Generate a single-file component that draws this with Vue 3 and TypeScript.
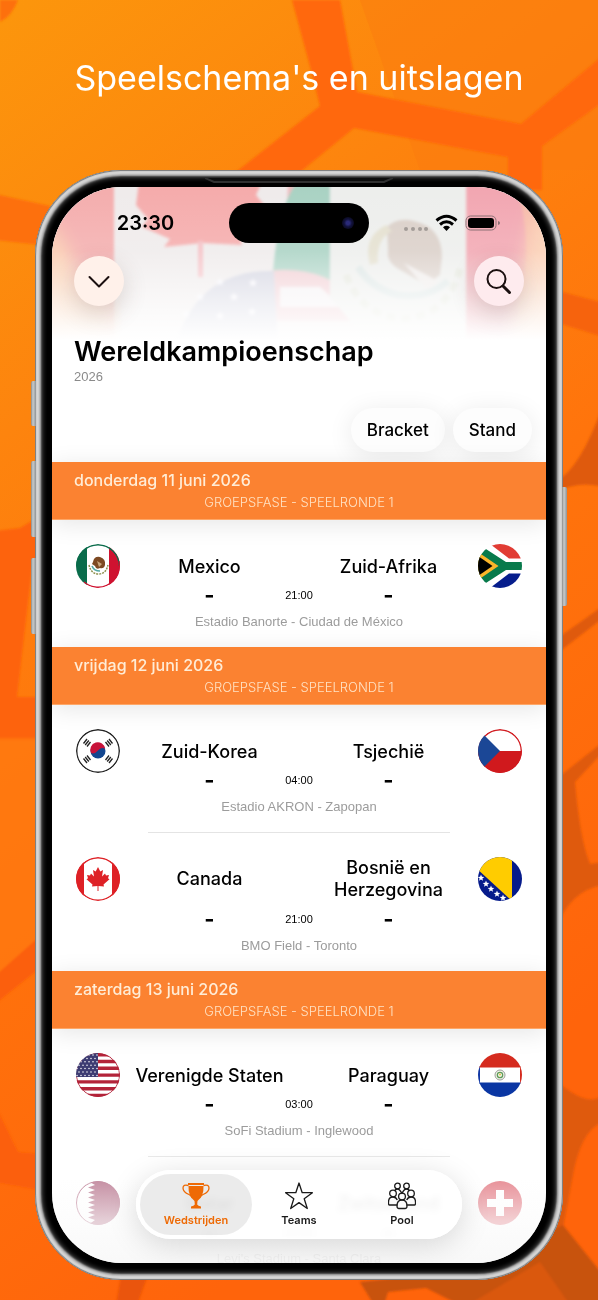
<script setup lang="ts">
type FlagId = 'mx' | 'za' | 'kr' | 'cz' | 'ca' | 'ba' | 'us' | 'py' | 'qa' | 'ch'

interface Team {
  flag: FlagId
  name: string
}

interface Match {
  home: Team
  away: Team
  time: string
  venue: string
  tall?: boolean
}

interface MatchDay {
  date: string
  round: string
  matches: Match[]
}

const days: MatchDay[] = [
  {
    date: 'donderdag 11 juni 2026',
    round: 'GROEPSFASE - SPEELRONDE 1',
    matches: [
      {
        home: { flag: 'mx', name: 'Mexico' },
        away: { flag: 'za', name: 'Zuid-Afrika' },
        time: '21:00',
        venue: 'Estadio Banorte - Ciudad de México',
      },
    ],
  },
  {
    date: 'vrijdag 12 juni 2026',
    round: 'GROEPSFASE - SPEELRONDE 1',
    matches: [
      {
        home: { flag: 'kr', name: 'Zuid-Korea' },
        away: { flag: 'cz', name: 'Tsjechië' },
        time: '04:00',
        venue: 'Estadio AKRON - Zapopan',
      },
      {
        home: { flag: 'ca', name: 'Canada' },
        away: { flag: 'ba', name: 'Bosnië en Herzegovina' },
        time: '21:00',
        venue: 'BMO Field - Toronto',
        tall: true,
      },
    ],
  },
  {
    date: 'zaterdag 13 juni 2026',
    round: 'GROEPSFASE - SPEELRONDE 1',
    matches: [
      {
        home: { flag: 'us', name: 'Verenigde Staten' },
        away: { flag: 'py', name: 'Paraguay' },
        time: '03:00',
        venue: 'SoFi Stadium - Inglewood',
      },
      {
        home: { flag: 'qa', name: 'Qatar' },
        away: { flag: 'ch', name: 'Zwitserland' },
        time: '21:00',
        venue: "Levi's Stadium - Santa Clara",
      },
    ],
  },
]

const usStars: { x: number; y: number }[] = []
for (let row = 0; row < 7; row++) {
  for (let col = 0; col < 6; col++) {
    usStars.push({ x: (row % 2 ? 3 : 1) + col * 4, y: 2 + row * 3.4 })
  }
}

const starPath = 'M0-3 .8-1 2.9-.9 1.2.4 1.8 2.4 0 1.2-1.8 2.4-1.2.4-2.9-.9-.8-1Z'
const bosniaStars = [[3, 21], [8, 27], [13, 32], [19, 37], [25, 41]]
const heroStars = [[168, 95], [148, 110], [182, 110], [134, 127], [168, 129], [201, 96], [200, 125]]
</script>

<template>
  <main class="stage">
    <svg class="backdrop" viewBox="0 0 598 1300" preserveAspectRatio="xMidYMid slice" aria-hidden="true">
      <defs>
        <linearGradient id="bgFill" x1="0" y1="0" x2=".35" y2="1">
          <stop offset="0" stop-color="#fc960c" />
          <stop offset=".3" stop-color="#fd840e" />
          <stop offset=".6" stop-color="#ff740c" />
          <stop offset="1" stop-color="#ff640b" />
        </linearGradient>
        <filter id="soft"><feGaussianBlur stdDeviation="1" /></filter>
      </defs>
      <rect width="598" height="1300" fill="url(#bgFill)" />
      <path d="M360 0H598V170H420Z" fill="#fb790f" opacity=".45" />
      <g filter="url(#soft)">
        <path d="M292 0H340L357 92 521 124 600 58V104L542 146V190H508V157L354 128 300 172H236L320 106 311 70Z" fill="#ff670a" />
        <path d="M-5 194 50 206V246L-5 240ZM0 0H18Q12 16 0 22Z" fill="#fd700c" />
        <path d="M-5 531 20 528 40 516V740H-5ZM33 560 17 697H40V560Z" fill="#fd640b" fill-rule="evenodd" />
        <path d="M-5 738H40V940L-5 976Z" fill="#ff790c" opacity=".7" />
        <path d="M-5 976 40 936V968L-5 1004ZM-5 1105 18 1152 40 1154V1190L-5 1182Z" fill="#fb5f0a" />
        <path d="M555 290 600 302V336L555 322Z" fill="#f6640a" />
        <path
          d="M555 482Q580 470 603 405V487Q580 480 555 492ZM555 640 603 606V618L555 655ZM555 780 603 742V752L575 782Q580 840 590 864L603 862V885Q570 890 555 930ZM555 1080Q590 1110 603 1094V1122Q580 1130 572 1180L555 1270Z"
          fill="#df5a0c"
        />
        <path d="M121 1275H148L137 1305H116Z" fill="#ea5507" />
        <path d="M360 1282 470 1270 563 1225 603 1275V1305H460L426 1288 388 1292 384 1305H374Z" fill="#c8520e" />
        <path d="M468 1305 540 1262 570 1305Z" fill="#e95d0b" opacity=".55" />
      </g>
    </svg>

    <h1 class="headline">Speelschema's en uitslagen</h1>

    <section class="phone">
      <span class="key key-action"></span>
      <span class="key key-up"></span>
      <span class="key key-down"></span>
      <span class="key key-power"></span>
      <svg class="speaker" viewBox="0 0 188 6" preserveAspectRatio="none" aria-hidden="true">
        <path d="M0 0 9 4H179L188 0" fill="#0d0d0d" stroke="#303030" stroke-width="2" />
      </svg>

      <div class="screen">
        <svg class="hero" viewBox="0 0 494 160" preserveAspectRatio="xMidYMin slice" aria-hidden="true">
          <defs>
            <linearGradient id="fade" x1="0" y1="0" x2="0" y2="1">
              <stop offset="0" stop-color="#fff" stop-opacity="0" />
              <stop offset=".4" stop-color="#fff" stop-opacity=".15" />
              <stop offset=".7" stop-color="#fff" stop-opacity=".65" />
              <stop offset=".95" stop-color="#fff" />
            </linearGradient>
            <filter id="haze"><feGaussianBlur stdDeviation="1.500" /></filter>
            <filter id="hazeWide"><feGaussianBlur stdDeviation="9" /></filter>
          </defs>
          <rect width="494" height="160" fill="#efebeb" />
          <g filter="url(#haze)">
            <path d="M-5-5H62V160H-5Z" fill="#f4adad" />
            <path d="M-8 30Q20 60 26 100L62 118V165H-8Z" fill="#fbd0ae" filter="url(#hazeWide)" />
            <path d="M87-5 84 18 96 32 90 40 118 52 112 60 150 56 190 58 186 44 212 18 204 8 210-5Z" fill="#f5abab" />
            <path d="M146 54H151V90H146Z" fill="#f4c0c4" />
            <path d="M236-5H262Q240 10 234 50Z" fill="#f0bcc0" />
            <path d="M245-5H278V98H220Q225 20 245-5Z" fill="#a9d2c3" />
            <path d="M216 84Q270 78 300 110L330 134H216Z" fill="#f1ccd1" />
            <path d="M228 100H268L290 120H228Z" fill="#f4f1f3" />
            <path d="M126 150Q150 82 222 84L226 160H126Z" fill="#d2d3e0" />
            <path
              v-for="(s, i) in heroStars"
              :key="i"
              :d="starPath"
              :transform="`translate(${s[0]} ${s[1]}) scale(1.6)`"
              fill="#f6f5fa"
            />
            <path d="M278-5H414V160H320L278 110Z" fill="#edeeec" />
            <path d="M335 40Q345 30 362 34 390 40 390 70L388 88 374 98 350 84Q334 76 336 64Z" fill="#dacfc8" />
            <path d="M318 78Q310 50 334 38L340 44Q324 52 326 76Z" fill="#e4e0cf" />
            <path d="M352 76 386 94 376 104Z" fill="#f0ecea" />
            <path d="M306 80Q320 102 346 108 376 112 396 94" fill="none" stroke="#dbe5e4" stroke-width="7" />
            <path d="M294 88Q310 130 352 132 396 128 408 82" fill="none" stroke="#e3e6dc" stroke-width="7" stroke-dasharray="9 6" />
            <path d="M414-5H500V160H414Z" fill="#f2a6b1" />
            <path d="M462-5Q484 50 466 120L470 165H505V-5Z" fill="#f6b9a9" />
            <path d="M482 30 505 10V165H455Z" fill="#fbd0b4" filter="url(#hazeWide)" />
          </g>
          <rect width="494" height="161" fill="url(#fade)" />
        </svg>

        <div class="status">
          <span class="clock">23:30</span>
          <span class="island"><i class="lens"></i></span>
          <svg class="signals" viewBox="0 0 99 20" aria-hidden="true">
            <g fill="#a39c98">
              <circle cx="3" cy="16" r="2" /><circle cx="10" cy="16" r="2" />
              <circle cx="17" cy="16" r="2" /><circle cx="23" cy="16" r="2" />
            </g>
            <g fill="none" stroke="#000" stroke-width="3">
              <path d="M33.500 7.500Q43.500-1 53.500 7.500" />
              <path d="M37 11.500Q43.500 6 50 11.500" />
            </g>
            <path d="M40 14.200Q43.500 11.500 47 14.200L43.500 18Z" />
            <rect x="63" y="3" width="30" height="14" rx="4.500" fill="none" stroke="#8b7075" />
            <rect x="65" y="5" width="26" height="10" rx="3" />
            <path d="M95 8Q97 8.500 97 10T95 12Z" fill="#8b7075" />
          </svg>
        </div>

        <nav class="topnav">
          <button type="button" class="round" aria-label="Sluiten">
            <svg viewBox="0 0 50 50"><path d="M15.500 21 25 30.500 34.500 21" /></svg>
          </button>
          <button type="button" class="round rose" aria-label="Zoeken">
            <svg viewBox="0 0 50 50">
              <circle cx="22.500" cy="23" r="9" />
              <path d="M29 30 35.500 36.500" class="handle" />
            </svg>
          </button>
        </nav>

        <header class="title">
          <h2>Wereldkampioenschap</h2>
          <p>2026</p>
        </header>

        <div class="pills">
          <button type="button">Bracket</button>
          <button type="button">Stand</button>
        </div>

        <div class="list">
          <section v-for="day in days" :key="day.date" class="day">
            <header class="band">
              <h3>{{ day.date }}</h3>
              <p>{{ day.round }}</p>
            </header>
            <article v-for="m in day.matches" :key="m.venue" class="match" :class="{ tall: m.tall }">
              <template v-for="(team, side) in [m.home, m.away]" :key="team.name">
                <svg class="flag" :class="side ? 'right' : 'left'" viewBox="0 0 44 44" aria-hidden="true">
                  <template v-if="team.flag === 'mx'">
                    <rect width="44" height="44" fill="#fff" />
                    <path d="M0 0H11V44H0Z" fill="#0a6c4b" />
                    <path d="M33 0H44V44H33Z" fill="#cf1230" />
                    <path d="M.7 22A21.300 21.300 0 0 1 43.300 22" fill="none" stroke="#0a6c4b" stroke-width="1.400" />
                    <path d="M43.300 17V22A21.300 21.300 0 0 1 8 38" fill="none" stroke="#cf1230" stroke-width="1.400" />
                    <path d="M17 18Q18 12 24 13 30 15 29 21 28 25 24 24 20 26 19 22L16 20Z" fill="#7d4a23" />
                    <path d="M21 17 26 20 23 23Z" fill="#c8a57c" />
                    <path d="M16 22Q18 27 24 27" fill="none" stroke="#51a8a3" stroke-width="1.600" />
                    <path d="M13 21Q15 30 22.500 30 30 30 32 21" fill="none" stroke="#8d8f4d" stroke-width="1.500" stroke-dasharray="2 1" />
                  </template>
                  <template v-else-if="team.flag === 'za'">
                    <rect width="44" height="44" fill="#fff" />
                    <path d="M12 0H44V14.500H31Z" fill="#e13c34" />
                    <path d="M12 44H44V29.500H31Z" fill="#061d8c" />
                    <path d="M-6-4 28 18H44V26H28L-6 48Z" fill="#087a4b" />
                    <path d="M0 8 20.500 22 0 36Z" fill="#fbb52a" />
                    <path d="M0 12 14.500 22 0 32Z" />
                  </template>
                  <template v-else-if="team.flag === 'kr'">
                    <rect width="44" height="44" fill="#fff" />
                    <circle cx="22" cy="22" r="7.500" fill="#13468f" />
                    <path d="M15 24A7.500 7.500 0 1 1 29.200 20Q26 17.500 22 21.500 18.500 25.500 15 24Z" fill="#c8133a" />
                    <g stroke="#222" stroke-width="1.300">
                      <path d="M7.500 14.500 11 10M9.200 16 12.800 11.500M11 17.500 14.500 13M36.500 14.500 33 10M34.800 16 31.200 11.500M33 17.500 29.500 13M7.500 29.500 11 34M9.200 28 12.800 32.500M11 26.500 14.500 31M36.500 29.500 33 34M34.800 28 31.200 32.500M33 26.500 29.500 31" />
                    </g>
                    <circle cx="22" cy="22" r="21.300" fill="none" stroke="#222" stroke-width="1.400" />
                  </template>
                  <template v-else-if="team.flag === 'cz'">
                    <rect width="44" height="44" fill="#fff" />
                    <circle cx="22" cy="22" r="21.300" fill="none" stroke="#d11d22" stroke-width="1.400" />
                    <path d="M0 22H44V44H0Z" fill="#d0191d" />
                    <path d="M0 0 22 22 0 44Z" fill="#1b4796" />
                  </template>
                  <template v-else-if="team.flag === 'ca'">
                    <rect width="44" height="44" fill="#fff" />
                    <path d="M0 0H8V44H0ZM36 0H44V44H36Z" fill="#de2126" />
                    <circle cx="22" cy="22" r="21.300" fill="none" stroke="#de2126" stroke-width="1.400" />
                    <path
                      d="M22 10 24.300 14.500 27 13 26 19.500 29 16.500 30 18.500 33 18 32 21.200 33.500 22.300 27.500 27.500 28 29.500 22.500 29V34H21.500V29L16 29.500 16.500 27.500 10.500 22.300 12 21.200 11 18 14 18.500 15 16.500 18 19.500 17 13 19.700 14.500Z"
                      fill="#de2126"
                    />
                  </template>
                  <template v-else-if="team.flag === 'ba'">
                    <rect width="44" height="44" fill="#061b8b" />
                    <path d="M0 0H34V44L-2 11Z" fill="#fc0" />
                    <path v-for="(s, i) in bosniaStars" :key="i" :d="starPath" :transform="`translate(${s[0]} ${s[1]}) scale(1.15)`" fill="#fff" />
                  </template>
                  <template v-else-if="team.flag === 'us'">
                    <rect width="44" height="44" fill="#fff" />
                    <path d="M0 1.700H44M0 8.500H44M0 15.300H44M0 22.100H44M0 28.900H44M0 35.700H44M0 42.500H44" stroke="#b32339" stroke-width="3.400" />
                    <path d="M0 0H22V24H0Z" fill="#3d3c72" />
                    <circle v-for="(s, i) in usStars" v-show="s.x < 22" :key="i" :cx="s.x" :cy="s.y" r=".75" fill="#fff" />
                    <path d="M22 .5A21.500 21.500 0 1 1 .6 24" fill="none" stroke="#b32339" />
                  </template>
                  <template v-else-if="team.flag === 'py'">
                    <rect width="44" height="44" fill="#fff" />
                    <path d="M1 12V32" stroke="#1238a4" stroke-width="2" />
                    <path d="M43 12V32" stroke="#d52b1e" stroke-width="2" />
                    <path d="M0 0H44V14.500H0Z" fill="#d52b1e" />
                    <path d="M0 29.500H44V44H0Z" fill="#0a36a3" />
                    <circle cx="22" cy="22" r="5" fill="#f4f4f0" stroke="#9b9f98" />
                    <circle cx="22" cy="22" r="2.700" fill="none" stroke="#5f9c57" stroke-width="1.300" />
                    <circle cx="22" cy="21.500" r="1" fill="#e4c646" />
                  </template>
                  <template v-else-if="team.flag === 'qa'">
                    <rect width="44" height="44" fill="#8a1c44" />
                    <path d="M0 0H12L19 4 12 6.500 19 9 12 11.500 19 14 12 16.500 19 19 12 21.500 19 24 12 26.500 19 29 12 31.500 19 34 12 36.500 19 39 12 44H0Z" fill="#fff" />
                    <circle cx="22" cy="22" r="21.500" fill="none" stroke="#8a1c44" />
                  </template>
                  <template v-else>
                    <rect width="44" height="44" fill="#d02030" />
                    <path d="M18 9H26V18H35V26H26V35H18V26H9V18H18Z" fill="#fff" />
                  </template>
                </svg>
                <div class="name" :class="side ? 'away' : 'home'">{{ team.name }}</div>
              </template>
              <div class="score">
                <strong>-</strong>
                <time>{{ m.time }}</time>
                <strong>-</strong>
              </div>
              <p class="venue">{{ m.venue }}</p>
            </article>
          </section>
        </div>

        <div class="veil"></div>
        <nav class="tabbar">
          <button type="button" class="tab active">
            <svg viewBox="0 0 28 28" aria-hidden="true">
              <path d="M6 1H22V3H6Z" />
              <path d="M6.500 4H21.500Q22 14 15.500 19L15.200 22.500Q16 24 19 24.500V26.500H9V24.500Q12 24 12.800 22.500L12.500 19Q6 14 6.500 4Z" />
              <path d="M6.500 3.500Q1 2 1 6 1 10 7 12.500 9 13.500 10.500 16M21.500 3.500Q27 2 27 6 27 10 21 12.500 19 13.500 17.500 16" class="line" />
            </svg>
            <span>Wedstrijden</span>
          </button>
          <button type="button" class="tab">
            <svg viewBox="0 0 28 28" aria-hidden="true">
              <path d="M14 1 17.200 10.700H27.400L19.200 16.800 22.300 26.500 14 20.600 5.700 26.500 8.800 16.800.6 10.700H10.800Z" class="line" />
            </svg>
            <span>Teams</span>
          </button>
          <button type="button" class="tab">
            <svg viewBox="0 0 28 28" aria-hidden="true">
              <g class="line">
                <circle cx="9.500" cy="4" r="2.800" />
                <circle cx="18.500" cy="4" r="2.800" />
                <path d="M6.500 9Q7.500 7 9.500 7T14 11.500Q16 7 18.500 7T21.500 9" />
                <circle cx="5" cy="11.500" r="3.300" />
                <circle cx="23" cy="11.500" r="3.300" />
                <path d="M9.500 23H1.500Q.3 23 .5 20 .5 15 5 15 8 15 9.300 18M18.500 23H26.500Q27.700 23 27.500 20 27.500 15 23 15 20 15 18.700 18" />
                <circle cx="14" cy="14.500" r="3.400" />
                <path d="M9 24Q9 18 14 18T19 24Q19 26.500 17 26.500H11Q9 26.500 9 24Z" />
              </g>
            </svg>
            <span>Pool</span>
          </button>
        </nav>
      </div>
    </section>
  </main>
</template>

<style>
body {
  background: #ff740c;
}
</style>

<style scoped>
.stage {
  position: relative;
  box-sizing: border-box;
  height: 100vh;
  display: flex;
  flex-direction: column;
  overflow: hidden;
  padding: 56px 35px 20px;
  font-family: Inter, 'Liberation Sans', sans-serif;
  color: #000;
}

h1,
h2,
h3,
p {
  margin: 0;
}

button {
  border: 0;
  padding: 0;
  font: inherit;
  color: inherit;
  cursor: pointer;
}

.backdrop {
  position: absolute;
  inset: 0;
  width: 100%;
  height: 100%;
}

.headline {
  position: relative;
  margin-bottom: 70px;
  font-size: 34px;
  line-height: 44px;
  font-weight: 400;
  text-align: center;
  white-space: nowrap;
  color: #fff;
}

/* device */
.phone {
  position: relative;
  flex: 1;
  min-height: 0;
  display: flex;
  padding: 17px;
  border-radius: 86px;
  background: #000;
  box-shadow:
    inset 0 0 1px 1px #777,
    inset 0 0 2px 4px #d8d8d8,
    inset 0 0 2px 6px #b4b4b4,
    inset 0 0 4px 8px #3f3f3f;
}

.key {
  position: absolute;
  left: -4px;
  width: 5px;
  border-radius: 2px 0 0 2px;
  background: linear-gradient(90deg, #8b8b89, #c9cbca 40%, #8f9396);
}

.key-action {
  top: 211px;
  height: 45px;
}

.key-up {
  top: 291px;
  height: 76px;
}

.key-down {
  top: 388px;
  height: 76px;
}

.key-power {
  top: 317px;
  left: auto;
  right: -4px;
  height: 119px;
  border-radius: 0 2px 2px 0;
}

.speaker {
  position: absolute;
  top: 8px;
  left: 50%;
  width: 188px;
  height: 6px;
  transform: translateX(-50%);
}

.screen {
  position: relative;
  flex: 1;
  min-width: 0;
  overflow: hidden;
  border-radius: 70px;
  background: #fff;
}

.hero {
  position: absolute;
  inset: 0 0 auto;
  width: 100%;
  height: 160px;
}

.status {
  position: relative;
  display: grid;
  grid-template-columns: 1fr 140px 1fr;
  align-items: center;
  padding-top: 16px;
}

.clock {
  padding-left: 10px;
  font-size: 20px;
  line-height: 24px;
  font-weight: 600;
  text-align: center;
}

.island {
  display: flex;
  align-items: center;
  justify-content: flex-end;
  height: 40px;
  border-radius: 20px;
  background: #000;
}

.lens {
  width: 12px;
  height: 12px;
  margin-right: 15px;
  border-radius: 50%;
  background: radial-gradient(circle, #2a2a78 0 20%, #12123c 45%, #08081a 80%);
}

.signals {
  width: 99px;
  height: 20px;
  margin-left: 34px;
}

.topnav {
  position: relative;
  display: flex;
  justify-content: space-between;
  padding: 13px 22px 0;
}

.round {
  width: 50px;
  height: 50px;
  border-radius: 50%;
  background: #fff1ea;
  box-shadow: 0 8px 24px rgba(90, 60, 50, 0.2);
}

.round.rose {
  background: #feebee;
}

.round svg {
  display: block;
  width: 50px;
  height: 50px;
  fill: none;
  stroke: #1b1010;
  stroke-width: 2;
  stroke-linecap: round;
  stroke-linejoin: round;
}

.round .handle {
  stroke-width: 3;
}

.title {
  position: relative;
  padding: 29px 22px 0;
}

.title h2 {
  font-size: 27px;
  line-height: 34px;
  font-weight: 600;
}

.title p {
  font-family: 'Liberation Sans', sans-serif;
  font-size: 13px;
  line-height: 15px;
  color: #8a8a8a;
}

.pills {
  display: flex;
  justify-content: flex-end;
  gap: 8px;
  padding: 24px 14px 10px;
}

.pills button {
  height: 44px;
  padding: 0 16px;
  border-radius: 22px;
  background: #fdfdfd;
  box-shadow: 0 4px 26px rgba(0, 0, 0, 0.09);
  font-size: 17px;
  font-weight: 500;
}

/* schedule */
.band {
  position: relative;
  height: 58px;
  box-sizing: border-box;
  padding: 7px 22px 0;
  background: #fb8231;
  box-shadow: 0 4px 24px rgba(0, 0, 0, 0.1);
  border-bottom: 1px solid #fda768;
}

.band h3 {
  font-size: 16px;
  line-height: 22px;
  font-weight: 500;
  color: #ffecd6;
}

.band p {
  font-size: 13px;
  line-height: 22px;
  font-weight: 300;
  text-align: center;
  color: #ffe2c4;
}

.match {
  position: relative;
  display: grid;
  grid-template-columns: 44px 1fr 1fr 44px;
  padding: 24px 24px 15px;
}

.match + .match {
  padding-top: 25px;
}

.match + .match::before {
  content: '';
  position: absolute;
  top: 0;
  left: 96px;
  right: 96px;
  height: 1px;
  background: #e4e4e4;
}

.flag {
  width: 44px;
  height: 44px;
  grid-row: 1 / 3;
  border-radius: 50%;
}

.flag.left {
  grid-column: 1;
}

.flag.right {
  grid-column: 4;
}

.name {
  grid-row: 1;
  align-self: center;
  padding-top: 12px;
  font-size: 18px;
  line-height: 22px;
  font-weight: 500;
  text-align: center;
}

.tall .name {
  padding-top: 0;
}

.home {
  grid-column: 2;
}

.away {
  grid-column: 3;
}

.score {
  grid-column: 2 / 4;
  grid-row: 2;
  display: grid;
  grid-template-columns: 1fr 0 1fr;
  align-items: center;
  justify-items: center;
  height: 34px;
}

.tall .score {
  height: 35px;
}

.score strong {
  font-size: 22px;
  line-height: 24px;
  font-weight: 700;
}

.score time {
  font-family: 'Liberation Sans', sans-serif;
  font-size: 11px;
  line-height: 14px;
}

.venue {
  grid-column: 1 / 5;
  grid-row: 3;
  font-family: 'Liberation Sans', sans-serif;
  font-size: 13px;
  line-height: 20px;
  text-align: center;
  color: #9c9c9c;
}

/* tab bar */
.veil {
  position: absolute;
  inset: auto 0 0;
  height: 120px;
  background: linear-gradient(rgba(255, 255, 255, 0), rgba(255, 255, 255, 0.5) 30%, rgba(252, 252, 252, 0.8) 65%, rgba(248, 248, 248, 0.93));
}

.tabbar {
  position: absolute;
  bottom: 24px;
  left: 17%;
  right: 17%;
  display: flex;
  padding: 4px;
  border-radius: 35px;
  background: rgba(255, 255, 255, 0.82);
  backdrop-filter: blur(3px);
  box-shadow:
    inset 0 0 2px 1px #fff,
    0 6px 30px rgba(0, 0, 0, 0.15);
}

.tab {
  flex: 1;
  display: flex;
  flex-direction: column;
  align-items: center;
  gap: 2px;
  height: 61px;
  box-sizing: border-box;
  padding-top: 8px;
  border-radius: 31px;
  background: none;
  color: #1a1a1a;
  font-size: 11px;
  line-height: 16px;
  font-weight: 600;
}

.tab + .tab {
  margin-left: -9px;
}

.tab.active {
  background: rgba(0, 0, 0, 0.08);
  color: #ee6a05;
}

.tab svg {
  width: 28px;
  height: 28px;
  fill: currentColor;
}

.tab .line {
  fill: none;
  stroke: currentColor;
  stroke-width: 1.3;
  stroke-linejoin: round;
}
</style>
